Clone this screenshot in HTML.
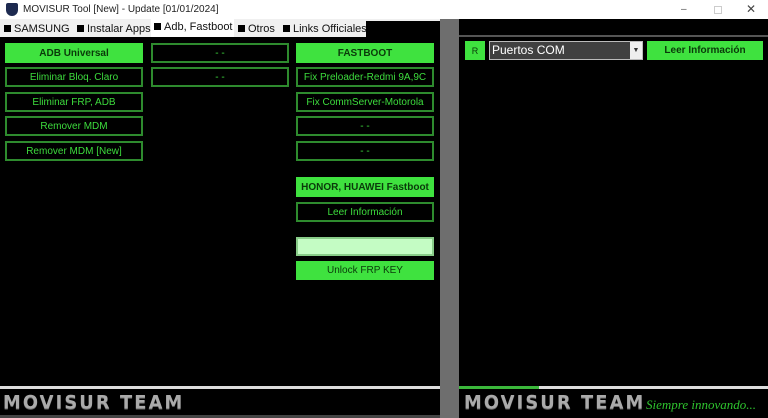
<!DOCTYPE html>
<html><head><meta charset="utf-8"><style>
*{margin:0;padding:0;box-sizing:border-box}
body{width:768px;height:418px;overflow:hidden;background:#000;font-family:"Liberation Sans",sans-serif;position:relative}
.a{position:absolute}
.title{left:0;top:0;width:768px;height:19px;background:#fff;font-size:10px;color:#222;line-height:19px}
.tabs{left:0;top:19px;width:440px;height:18px;background:#f0f0f0}
.tab{position:absolute;top:2px;height:16px;font-size:11px;color:#111;line-height:16px;white-space:nowrap}
.sq{display:inline-block;width:7px;height:7px;background:#000;margin-right:3px;vertical-align:0px}
.b{position:absolute;border:2px solid #2e8b2e;color:#3ddc3d;font-size:10px;text-align:center;display:flex;align-items:center;justify-content:center;background:#000;white-space:nowrap}
.g{background:#3fe23f;border-color:#3fe23f;font-weight:bold;color:#0a3a0a}
.mt{font-family:"DejaVu Sans",sans-serif;font-weight:bold;font-size:17px;color:#aaa;letter-spacing:2px;transform-origin:0 0;transform:scale(1.05,1.1);text-shadow:0 1px 0 #666;white-space:nowrap}
</style></head><body>
<div class="a title"><span style="position:absolute;left:6px;top:3px;width:12px;height:13px;background:#1d2a50;border-radius:2px 2px 6px 6px"></span><span style="position:absolute;left:23px">MOVISUR Tool [New] - Update [01/01/2024]</span>
<span style="position:absolute;left:681px;color:#555">–</span><span style="position:absolute;left:714px;top:6px;width:8px;height:8px;border:1px solid #ccc"></span><span style="position:absolute;left:746px;font-size:12px;color:#444">✕</span></div>
<div class="a tabs">
<div class="tab" style="left:4px"><span class="sq"></span>SAMSUNG</div>
<div class="tab" style="left:77px"><span class="sq"></span>Instalar Apps</div>
<div class="tab" style="left:151px;top:0;height:18px;background:#fff;padding:0 3px;width:83px"><span class="sq"></span>Adb, Fastboot</div>
<div class="tab" style="left:238px"><span class="sq"></span>Otros</div>
<div class="tab" style="left:283px"><span class="sq"></span>Links Officiales</div>
<div style="position:absolute;left:366px;top:2px;width:74px;height:16px;background:#000"></div>
</div>
<div class="a" style="left:440px;top:19px;width:19px;height:399px;background:#6e6e6e"></div>
<div class="a" style="left:459px;top:35px;width:309px;height:2px;background:#555"></div>

<div class="b g" style="left:5px;top:43px;width:138px;height:20px">ADB Universal</div>
<div class="b" style="left:5px;top:67px;width:138px;height:20px">Eliminar Bloq. Claro</div>
<div class="b" style="left:5px;top:92px;width:138px;height:20px">Eliminar FRP, ADB</div>
<div class="b" style="left:5px;top:116px;width:138px;height:20px">Remover MDM</div>
<div class="b" style="left:5px;top:141px;width:138px;height:20px">Remover MDM [New]</div>
<div class="b" style="left:151px;top:43px;width:138px;height:20px">- -</div>
<div class="b" style="left:151px;top:67px;width:138px;height:20px">- -</div>
<div class="b g" style="left:296px;top:43px;width:138px;height:20px">FASTBOOT</div>
<div class="b" style="left:296px;top:67px;width:138px;height:20px">Fix Preloader-Redmi 9A,9C</div>
<div class="b" style="left:296px;top:92px;width:138px;height:20px">Fix CommServer-Motorola</div>
<div class="b" style="left:296px;top:116px;width:138px;height:20px">- -</div>
<div class="b" style="left:296px;top:141px;width:138px;height:20px">- -</div>
<div class="b g" style="left:296px;top:177px;width:138px;height:20px">HONOR, HUAWEI Fastboot</div>
<div class="b" style="left:296px;top:202px;width:138px;height:20px">Leer Información</div>
<div class="b" style="left:296px;top:237px;width:138px;height:19px;background:#c4fcc4;border-color:#8c8"></div>
<div class="b g" style="left:296px;top:261px;width:138px;height:19px;font-weight:normal">Unlock FRP KEY</div>

<div class="b g" style="left:465px;top:41px;width:20px;height:19px;font-weight:normal;font-size:9px">R</div>
<div class="a" style="left:489px;top:41px;width:154px;height:19px;background:#404040;border:1px solid #bbb;color:#fff;font-size:12px;line-height:17px;padding-left:2px">Puertos COM<span style="position:absolute;right:0;top:0;width:12px;height:17px;background:#eee;color:#333;font-size:7px;text-align:center">▼</span></div>
<div class="b g" style="left:647px;top:41px;width:116px;height:19px">Leer Información</div>

<div class="a" style="left:0;top:386px;width:440px;height:3px;background:#ddd"></div>
<div class="a" style="left:459px;top:386px;width:80px;height:3px;background:#3bb83b"></div>
<div class="a" style="left:539px;top:386px;width:229px;height:3px;background:#ddd"></div>
<div class="a mt" style="left:3px;top:392px">MOVISUR TEAM</div>
<div class="a mt" style="left:464px;top:392px">MOVISUR TEAM</div>
<div class="a" style="left:646px;top:397px;font-family:'Liberation Serif',serif;font-style:italic;color:#2ec42e;font-size:13px">Siempre innovando...</div>
<div class="a" style="left:0;top:415px;width:440px;height:3px;background:#444"></div>
</body></html>
